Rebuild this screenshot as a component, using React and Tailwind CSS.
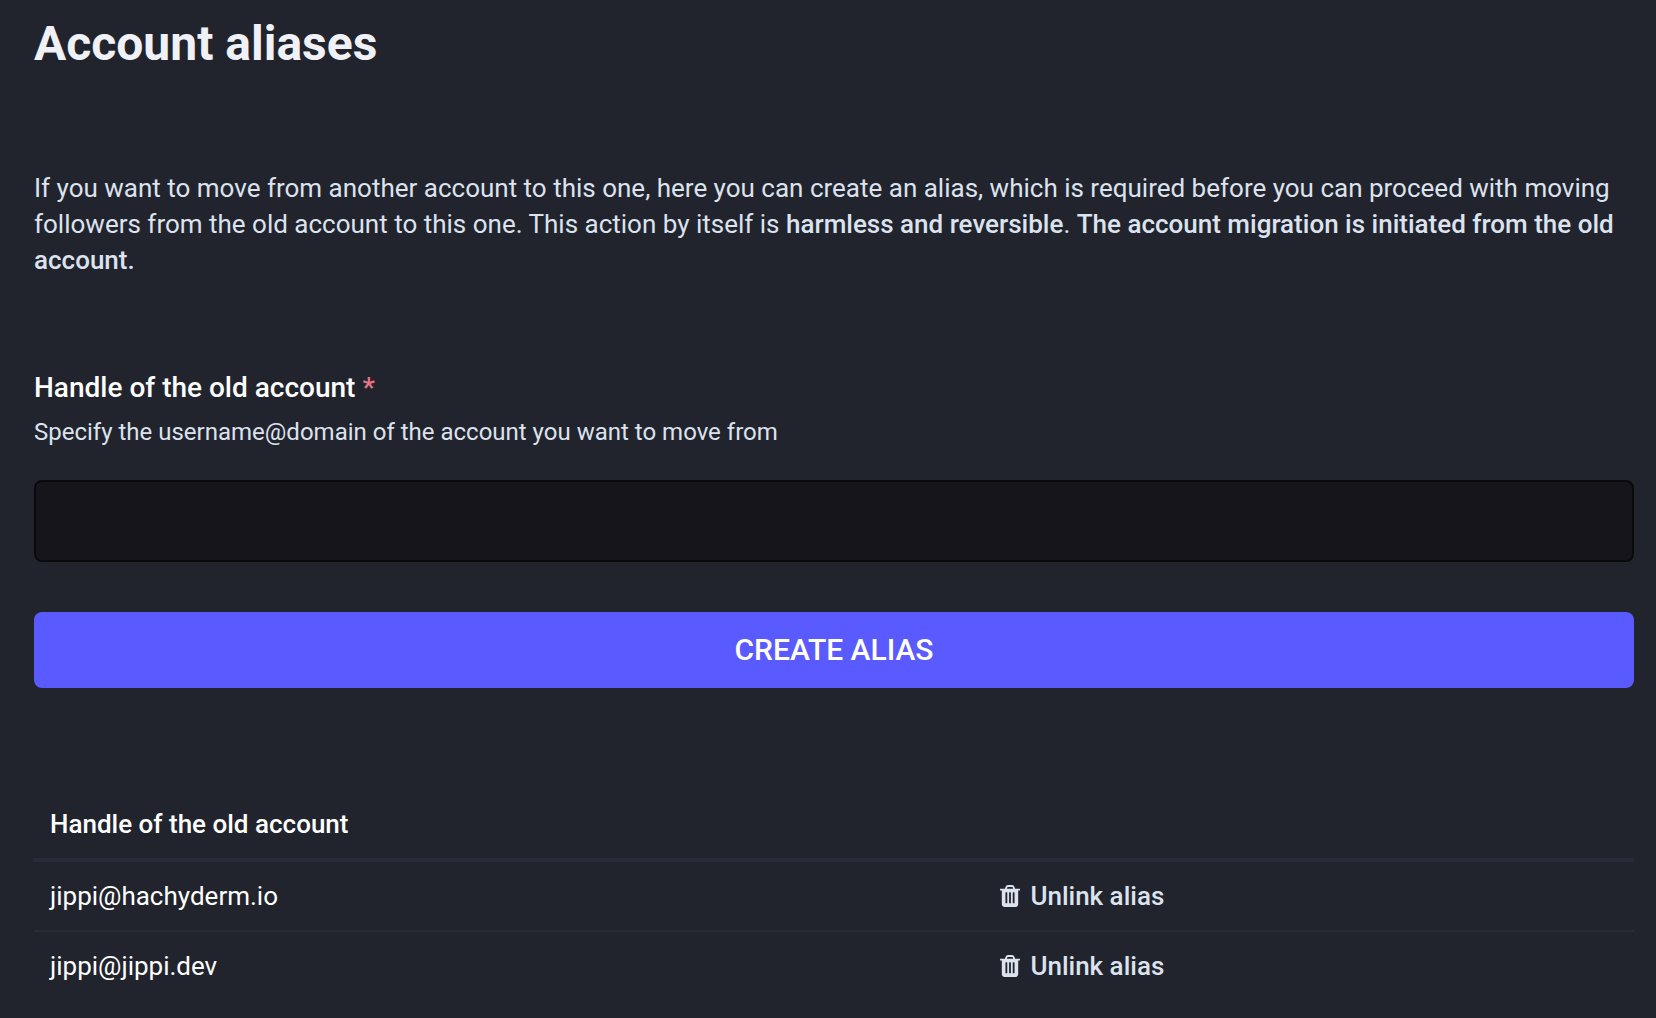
import React from "react";

const aliases = ["jippi@hachyderm.io", "jippi@jippi.dev"];

function TrashIcon() {
  return (
    <svg aria-hidden="true" viewBox="0 0 1408 1536" className="h-[22px] w-5 shrink-0" fill="currentColor">
      <path d="M512 1248v-704q0-14-9-23t-23-9h-64q-14 0-23 9t-9 23v704q0 14 9 23t23 9h64q14 0 23-9t9-23zM768 1248v-704q0-14-9-23t-23-9h-64q-14 0-23 9t-9 23v704q0 14 9 23t23 9h64q14 0 23-9t9-23zM1024 1248v-704q0-14-9-23t-23-9h-64q-14 0-23 9t-9 23v704q0 14 9 23t23 9h64q14 0 23-9t9-23zM480 256h448l-48-117q-7-9-17-11h-317q-10 2-17 11zM1408 288v64q0 14-9 23t-23 9h-96v948q0 83-47 143.500t-113 60.500h-832q-66 0-113-58.500t-47-141.500v-952h-96q-14 0-23-9t-9-23v-64q0-14 9-23t23-9h309l70-167q15-37 54-63t79-26h320q40 0 79 26t54 63l70 167h309q14 0 23 9t9 23z" />
    </svg>
  );
}

export default function App() {
  return (
    <main className="min-h-screen bg-[#21242d] pt-[17px] pr-[22px] pl-[34px] font-['Roboto',sans-serif] text-[#dce2ee]">
      <h1 className="text-[48px] leading-[54px] font-bold text-[#eff1f6]">Account aliases</h1>
      <form onSubmit={(e) => e.preventDefault()}>
        <p className="mt-[99px] text-[26px] leading-9">
          If you want to move from another account to this one, here you can create an alias, which is required before you can proceed with moving followers from the old account to this one. This action by itself is <strong className="font-medium">harmless and reversible</strong>. <strong className="font-medium">The account migration is initiated from the old account.</strong>
        </p>
        <label htmlFor="handle" className="mt-[92px] block text-[28px] leading-9 font-medium text-white">
          Handle of the old account <span className="text-[#e87487]">*</span>
        </label>
        <p id="hint" className="mt-2 text-[24px] leading-9">Specify the username@domain of the account you want to move from</p>
        <input id="handle" aria-describedby="hint" required className="mt-[30px] block h-[82px] w-full rounded-lg border-2 border-[#0a0a0d] bg-[#16151b] px-5 text-[28px] text-white" />
        <button className="mt-[50px] block h-[76px] w-full rounded-lg bg-[#595aff] pb-0.5 text-[30px] font-medium text-white uppercase">Create alias</button>
      </form>
      <table className="mt-[102px] w-full table-fixed text-left text-[26px] leading-9 text-white">
        <thead>
          <tr className="border-b-4 border-[#292c38]">
            <th className="w-[59.4%] px-4 py-4 font-medium">Handle of the old account</th>
            <th />
          </tr>
        </thead>
        <tbody>
          {aliases.map((alias) => (
            <tr key={alias} className="border-b-2 border-[#292c38] last:border-b-0">
              <td className="px-4 py-4">{alias}</td>
              <td className="px-4 py-4">
                <a href="#unlink" className="flex w-fit items-center gap-2.5 font-medium text-[#dce2ee]"><TrashIcon />Unlink alias</a>
              </td>
            </tr>
          ))}
        </tbody>
      </table>
    </main>
  );
}
